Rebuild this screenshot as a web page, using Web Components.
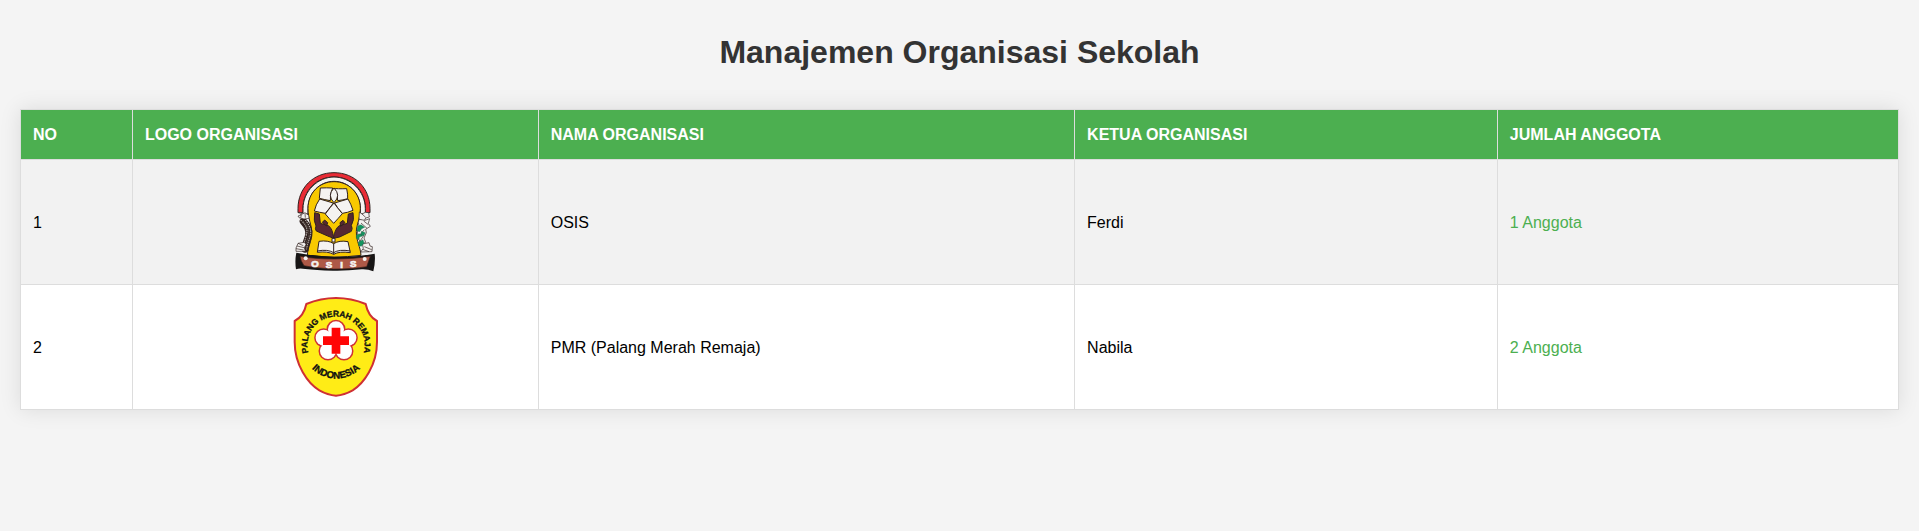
<!DOCTYPE html>
<html lang="id">
<head>
<meta charset="utf-8">
<meta name="viewport" content="width=device-width, initial-scale=1">
<title>Manajemen Organisasi Sekolah</title>
<style>
  body { margin: 0; background: #f4f4f4; font: 16px/25px "Liberation Sans", Arial, sans-serif; color: #000; }
</style>
</head>
<body>
<page-shell>
  <span slot="title">Manajemen Organisasi Sekolah</span>
  <org-table></org-table>
</page-shell>

<template id="osis-art">
  <svg viewBox="0 36 330 300" role="img" aria-label="Logo OSIS">
    <g stroke="#30211f" stroke-width="3" stroke-linejoin="round">
      <path fill="#e92b35" d="M54 158V146C54 84 100 38 162 38S270 84 270 146V158H256V146C256 92 215 51 162 51S69 92 69 146V158Z"/>
      <path fill="#f6f4f2" d="M69 158V146C69 92 115 51 162 51S256 92 256 146V162H241V146C241 100 206 64 162 64S84 100 84 146V162H69Z"/>
      <path fill="#f8c900" d="M84 145C84 99 118 65 162 65S241 99 241 145C241 177 229 194 229 215C229 246 241 258 243 286Q162 296 82 286C84 258 95 246 95 215C95 194 84 178 84 145Z"/>
      <g fill="#f5f3f1">
        <path d="M121 84Q140 83 158 84Q149 102 151 122Q134 119 118 115Z"/>
        <path d="M162 85Q170 87 200 86Q204 104 203 116Q190 120 173 122Q175 102 162 85Z"/>
        <path d="M162 84Q140 106 162 128Q184 106 162 84Z"/>
        <path d="M119 117L160 129Q150 143 136 160Q118 157 103 153Q107 134 119 117Z"/>
        <path d="M204 117L164 129Q172 145 187 160Q203 158 219 151Q213 132 204 117Z"/>
        <path d="M162 129Q151 141 136 162Q148 176 161 190Q174 176 187 161Q171 142 162 129Z"/>
      </g>
      <g fill="#572832">
        <path d="M104 158L118 162L121 190L145 197Q158 205 161 235L143 228L109 213Q104 207 108 198Q100 183 104 158Z"/>
        <path d="M219 158L205 162L202 190L178 197Q165 205 160 235L179 231L214 214Q219 206 214 196Q224 180 219 158Z"/>
      </g>
      <path fill="#572832" d="M127 187L134 180L143 188L140 198ZM180 188L189 181L195 188L182 199Z"/>
      <path fill="#f5f3f1" d="M156 235H165V246H156ZM117 244Q145 240 161 251Q178 240 204 245L211 278Q178 273 161 283Q143 273 112 277Z"/>
      <path fill="none" d="M161 251V283M112 273Q143 267 161 278Q177 267 211 273"/>
    </g>
    <g fill="none" stroke-linecap="round">
      <path stroke="#30211f" stroke-width="22" d="M70 184C81 197 89 207 86 226C83 242 76 250 75 267"/>
      <path stroke="#d5d0ca" stroke-width="3" stroke-dasharray="2 5" d="M63 181C79 197 84 207 79 226C75 242 71 250 69 267M77 181C88 197 95 210 91 226C87 242 82 251 80 267"/>
      <path stroke="#70695f" stroke-width="2" stroke-dasharray="3 5" d="M70 184C81 197 89 207 86 226C83 242 76 250 75 267"/>
    </g>
    <g fill="#f3f1ef" stroke="#30211f" stroke-width="2">
      <path d="M59 156L67 162L75 158L86 166L87 175L72 177L57 173L54 168L62 166Z"/>
      <path d="M48 264L54 250L73 247L78 253L73 263L76 274L48 274Z"/>
      <path d="M54 250L70 257M51 258L72 263M48 266L71 270M65 161L62 174M75 160L76 173" fill="none"/>
      <path d="M238 156L246 162L256 157L266 158L268 171L257 174L252 184L237 177Z"/>
      <path d="M237 178L255 181L269 176L265 190L271 199L257 208L259 218L252 234L257 247L244 253L237 239L232 216L238 201L235 188Z"/>
      <path d="M247 252L267 248L270 258L277 260L276 275L242 276L250 265Z"/>
      <path d="M251 183L265 194M243 189L261 205M253 209L236 230M253 224L239 245M246 162L257 172M253 260L275 269M248 268L267 275" fill="none"/>
    </g>
    <path fill="#13945f" stroke="#245846" d="M232 199L243 194L254 202L245 206L239 215L231 213ZM229 224L241 221L248 228L238 231L236 239L229 235ZM235 246L249 239L252 249L244 259L236 257ZM244 214L256 218L251 227L243 225Z"/>
    <path fill="#171515" d="M49 278Q104 288 162 291Q224 293 284 281Q287 304 280 334Q263 327 245 328Q199 333 158 332Q106 331 76 327Q58 323 48 328Q44 302 49 278Z"/>
    <path fill="#ad5947" stroke="#3b201a" stroke-width="2" d="M60 289Q104 297 163 297Q221 297 271 289L260 320Q218 327 161 327Q105 324 72 317Q62 303 60 289Z"/>
    <g fill="#f5f3f1"><circle cx="77" cy="295" r="6"/><circle cx="254" cy="297" r="6"/></g>
    <g class="letter" fill="#f5f3f1" stroke="#f5f3f1" stroke-width="2" font-size="29">
      <text x="94" y="320">O</text><text x="137" y="324">S</text><text x="181" y="324">I</text><text x="210" y="321">S</text>
    </g>
  </svg>
</template>

<template id="pmr-art">
  <svg viewBox="0 36 330 300" role="img" aria-label="Logo Palang Merah Remaja Indonesia">
    <defs>
      <path id="upper" d="M85 203A86 86 0 1 1 251 203"/>
      <path id="lower" d="M70 207A102 102 0 0 0 266 207"/>
    </defs>
    <path fill="#ffec16" stroke="#cf3034" stroke-width="6" stroke-linejoin="round" d="M79 57Q122 39 168 39T257 57C262 81 273 99 291 108V171C291 240 251 296 218 316Q193 330 168 332Q143 330 118 316C84 296 44 240 44 171V108C63 98 74 81 79 57Z"/>
    <g fill="#fff" stroke="#cf3034" stroke-width="9">
      <circle cx="168" cy="133" r="24"/><circle cx="205" cy="158" r="24"/><circle cx="192" cy="198" r="24"/><circle cx="144" cy="198" r="24"/><circle cx="131" cy="158" r="24"/>
    </g>
    <g fill="#fff">
      <circle cx="168" cy="133" r="24"/><circle cx="205" cy="158" r="24"/><circle cx="192" cy="198" r="24"/><circle cx="144" cy="198" r="24"/><circle cx="131" cy="158" r="24"/><circle cx="168" cy="168" r="35"/>
    </g>
    <path fill="#ff0505" d="M155 128H181V154H207V180H181V206H155V180H129V154H155Z"/>
    <g class="letter" fill="#111" stroke="#111" text-anchor="middle">
      <text font-size="25"><textPath href="#upper" startOffset="50%">PALANG MERAH REMAJA</textPath></text>
      <text font-size="29"><textPath href="#lower" startOffset="50%">INDONESIA</textPath></text>
    </g>
  </svg>
</template>

<script>
  class PageShell extends HTMLElement {
    constructor() {
      super();
      this.attachShadow({ mode: "open" }).innerHTML = `
        <style>
          :host { display: block; padding: 20px; }
          h1 { margin: 8px 0 32px; font-size: 32px; line-height: 49px; text-align: center; color: #333; }
        </style>
        <main><h1><slot name="title"></slot></h1><slot></slot></main>`;
    }
  }

  class OrgLogo extends HTMLElement {
    constructor() {
      super();
      this.attachShadow({ mode: "open" }).innerHTML = `
        <style>
          :host { display: flex; justify-content: center; }
          svg { display: block; width: 110px; height: 100px; }
          .letter { font-family: "Liberation Sans", Arial, sans-serif; font-weight: bold; }
        </style>`;
    }
    connectedCallback() {
      const art = document.getElementById(this.getAttribute("name") + "-art");
      this.shadowRoot.append(art.content.cloneNode(true));
    }
  }

  class MemberLink extends HTMLElement {
    constructor() {
      super();
      this.attachShadow({ mode: "open" }).innerHTML = `
        <style>
          :host { display: inline; }
          a { color: #4caf50; text-decoration: none; }
          a:hover { text-decoration: underline; }
        </style>
        <a href="#anggota"><slot></slot></a>`;
    }
  }

  class OrgTable extends HTMLElement {
    constructor() {
      super();
      this.attachShadow({ mode: "open" }).innerHTML = `
        <style>
          :host { display: block; }
          table { width: 100%; table-layout: fixed; border-collapse: collapse; background: #fff; box-shadow: 0 0 20px rgba(0, 0, 0, .1); }
          th, td { padding: 12px; border: 1px solid #ddd; text-align: left; overflow-wrap: anywhere; }
          th { background: #4caf50; color: #fff; }
          tbody tr:nth-child(odd) { background: #f2f2f2; }
          .no { width: 5.96%; } .logo { width: 21.61%; } .name { width: 28.56%; } .lead { width: 22.51%; }
        </style>
        <table>
          <colgroup><col class="no"><col class="logo"><col class="name"><col class="lead"><col></colgroup>
          <thead><tr>
            <th scope="col">NO</th><th scope="col">LOGO ORGANISASI</th><th scope="col">NAMA ORGANISASI</th><th scope="col">KETUA ORGANISASI</th><th scope="col">JUMLAH ANGGOTA</th>
          </tr></thead>
          <tbody>
            <tr><td>1</td><td><org-logo name="osis"></org-logo></td><td>OSIS</td><td>Ferdi</td><td><member-link>1 Anggota</member-link></td></tr>
            <tr><td>2</td><td><org-logo name="pmr"></org-logo></td><td>PMR (Palang Merah Remaja)</td><td>Nabila</td><td><member-link>2 Anggota</member-link></td></tr>
          </tbody>
        </table>`;
    }
  }

  customElements.define("page-shell", PageShell);
  customElements.define("org-logo", OrgLogo);
  customElements.define("member-link", MemberLink);
  customElements.define("org-table", OrgTable);
</script>
</body>
</html>
